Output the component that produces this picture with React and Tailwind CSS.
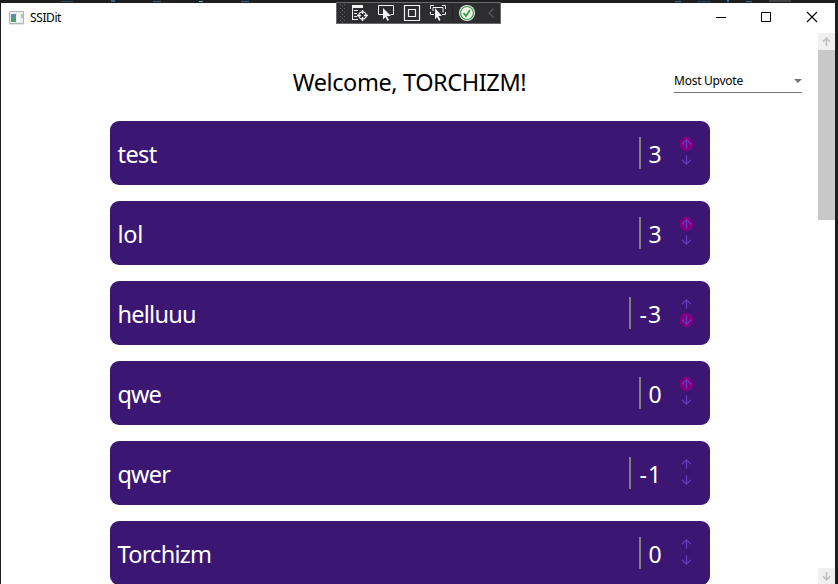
const posts = [
  { name: 'test', votes: '3', vote: 'up', cls: 'tracking-[-0.6px]', votesCls: 'w-[13px]' },
  { name: 'lol', votes: '3', vote: 'up', cls: 'tracking-[-0.3px]', votesCls: 'w-[13px]' },
  { name: 'helluuu', votes: '-3', vote: 'down', cls: 'tracking-[-0.75px]', votesCls: 'w-[23px] pl-px tracking-[1px]' },
  { name: 'qwe', votes: '0', vote: 'up', cls: 'tracking-[-0.9px]', votesCls: 'w-[13px]' },
  { name: 'qwer', votes: '-1', vote: '', cls: 'tracking-[-0.85px]', votesCls: 'w-[23px] pl-px tracking-[1px]' },
  { name: 'Torchizm', votes: '0', vote: '', cls: 'tracking-[-0.75px]', votesCls: 'w-[13px]' },
];

function VoteArrow({ down, active }) {
  return (
    <button className="flex h-4 w-4 items-center justify-center text-[#673ab7]">
      <svg width="16" height="16" viewBox="0 0 16 16" fill="none">
        {active && <circle cx="7.5" cy="8" r="7" fill="#800080" />}
        <g transform={down ? 'rotate(180 7.5 8)' : undefined} stroke="currentColor" strokeWidth="1.3">
          <path d="M7.5 12.7V4M3.1 8.2L7.5 3.8L11.9 8.2" />
        </g>
      </svg>
    </button>
  );
}

function PostCard({ post }) {
  return (
    <div className="flex h-16 w-[600px] shrink-0 items-center rounded-[9px] bg-[#3b1773] pl-2 pr-[15px] text-white">
      <span className={`flex-1 pt-px text-[23.5px] leading-8 ${post.cls}`}>{post.name}</span>
      <div className="h-8 w-[2px] bg-[#808080]" />
      <span className={`ml-2 whitespace-nowrap pt-px text-[23px] leading-8 ${post.votesCls}`}>{post.votes}</span>
      <div className="ml-[17px] flex flex-col pb-[3px]">
        <VoteArrow active={post.vote === 'up'} />
        <VoteArrow down active={post.vote === 'down'} />
      </div>
    </div>
  );
}

function DebugToolbar() {
  return (
    <div className="absolute left-[336px] top-[2px] h-[22px] w-[165px] border border-[#6a6a6c] bg-[#2d2d30]">
      <svg width="163" height="20" viewBox="337 3 163 20" fill="none">
        <g fill="#626266">
          {[4, 8, 12, 16, 20].map((y) => (
            <g key={y}>
              <path d={`M340 ${y}h1v1h-1zM344 ${y}h1v1h-1zM342 ${y + 2}h1v1h-1z`} />
            </g>
          ))}
        </g>
        <g fill="#f1f1f1">
          <path d="M352 5h11v3h-11zM352 8h1v12h-1zM354 10h4v1h-4zM354 13h3v1h-3zM354 16h3v1h-3zM352 19h6v1h-6z" />
        </g>
        <g stroke="#f1f1f1" strokeWidth="1.3">
          <circle cx="362.5" cy="15.5" r="3.7" />
          <path d="M362.5 10v4M362.5 17v4M357 15.5h4M364 15.5h4" />
        </g>
        <path d="M383 14.5h-4.500v-9h15v9h-3" stroke="#f1f1f1" />
        <path d="M383 8l8 8h-4l2 4-1.500 1-2-4-2.500 2.500z" fill="#f1f1f1" />
        <path d="M404.500 5.500h15v15h-15zM408.500 9.500h7v7h-7z" stroke="#f1f1f1" strokeWidth="1.2" />
        <path d="M430.500 9v-3.500h3.500M442 5.500h3.500v3.500M445.500 12v2.500h-3.500M434 14.500h-3.500v-2.500M433 11V7.500h10v5" stroke="#f1f1f1" />
        <path d="M435 8l7 8h-3.500l2 4-1.500 1-2-4-2 2.500z" fill="#f1f1f1" />
        <path d="M452.500 6v14" stroke="#222225" />
        <circle cx="467" cy="13" r="8" fill="#f1f1f1" />
        <circle cx="467" cy="13" r="6.500" stroke="#339c3c" strokeWidth="1.200" />
        <path d="M463.500 13l2.500 3 4-6" stroke="#339c3c" strokeWidth="1.800" />
        <path d="M493.500 8.500l-4.500 4.500 4.500 4.500" stroke="#59595c" strokeWidth="1.300" />
      </svg>
    </div>
  );
}

function AppIcon() {
  return (
    <svg width="15" height="14" viewBox="0 0 15 14">
      <defs>
        <linearGradient id="app" x2="0.4" y2="1">
          <stop stopColor="#6189b2" />
          <stop offset="1" stopColor="#4aa36c" />
        </linearGradient>
      </defs>
      <path d="M.5.500h14v12H.5z" fill="#eceeef" stroke="#b2b5b8" />
      <path d="M2 3h5v8H2z" fill="url(#app)" />
      <path d="M8 3h3v8H8z" fill="#fff" />
      <path d="M12 3h2v4h-2z" fill="#a5c9bd" />
      <path d="M0 13h15v1H0z" fill="#e5e5e5" />
    </svg>
  );
}

function TitleBar() {
  return (
    <header className="flex h-[30px] shrink-0 items-center pl-2">
      <div className="pb-px">
        <AppIcon />
      </div>
      <span className="ml-[6px] flex-1 text-[12px] leading-4 tracking-[-0.4px]">SSIDit</span>
      <svg width="137" height="30" viewBox="698 3 137 30" fill="none" stroke="#000">
        <path d="M716 17.500h10M761.500 12.500h9v9h-9z" />
        <path d="M807 12l10 10M817 12l-10 10" strokeWidth="1.100" />
      </svg>
    </header>
  );
}

function ScrollButton({ down }) {
  return (
    <div className="flex h-[17px] w-[17px] shrink-0 items-center justify-center bg-[#f0f0f0]">
      <svg width="9" height="9" viewBox="0 0 9 9" fill="none" stroke="#bfbfbf" strokeWidth="1.600">
        <path d={down ? 'M4.500 0v7.500M1 4.300l3.500 3.500L8 4.300' : 'M4.500 9V1.500M1 4.700l3.500-3.500L8 4.700'} />
      </svg>
    </div>
  );
}

function ScrollBar() {
  return (
    <div className="flex h-[552px] w-[17px] shrink-0 flex-col">
      <ScrollButton />
      <div className="h-[170px] bg-[#c8c8c8]" />
      <div className="flex-1" />
      <ScrollButton down />
    </div>
  );
}

export default function App() {
  return (
    <div className="relative h-[584px] w-[838px] overflow-hidden bg-[#1e1e1e] pl-px pr-[3px] pt-[3px] font-['Noto_Sans',sans-serif] text-black">
      <div className="flex h-[582px] flex-col bg-white">
        <TitleBar />
        <div className="flex">
          <main className="flex flex-1 flex-col items-center">
            <div className="grid h-[88px] w-full shrink-0 grid-cols-[1fr_auto_1fr] items-start">
              <div />
              <h1 className="mt-[33px] whitespace-nowrap text-[23.5px] leading-8 tracking-[-0.4px]">Welcome, TORCHIZM!</h1>
              <div className="mr-4 mt-[38px] flex h-[22px] w-32 items-center justify-between justify-self-end border-b border-[#757575]">
                <span className="pb-[2px] text-[12px] leading-4 tracking-[-0.25px]">Most Upvote</span>
                <svg className="mb-px" width="8" height="4" viewBox="0 0 8 4">
                  <path d="M0 0h8L4 4z" fill="#757575" />
                </svg>
              </div>
            </div>
            <div className="flex flex-col gap-4">
              {posts.map((post) => (
                <PostCard key={post.name} post={post} />
              ))}
            </div>
          </main>
          <ScrollBar />
        </div>
      </div>
      <div className="absolute left-0 top-0 flex h-[2px] w-full items-center gap-[38px] overflow-hidden pl-[61px]">
        <div className="h-px w-3 bg-[#294b68]" />
        <div className="h-[2px] w-1 bg-[#32658e]" />
        <div className="h-px w-2 bg-[#356487]" />
        <div className="h-px w-1 bg-[#7dacc9]" />
        <div className="h-px w-2 bg-[#356487]" />
      </div>
      <div className="absolute left-[675px] top-0 flex h-[2px] w-[140px] items-start gap-[17px]">
        <div className="mt-px h-px w-[6px] bg-[#386c94]" />
        <div className="mt-px h-px w-[12px] bg-[#294b68]" />
        <div className="h-[2px] w-[2px] bg-[#3977a5]" />
        <div className="mt-px h-px w-[6px] bg-[#386c94]" />
        <div className="h-[2px] w-[22px] bg-[#424247]" />
      </div>
      <DebugToolbar />
    </div>
  );
}
